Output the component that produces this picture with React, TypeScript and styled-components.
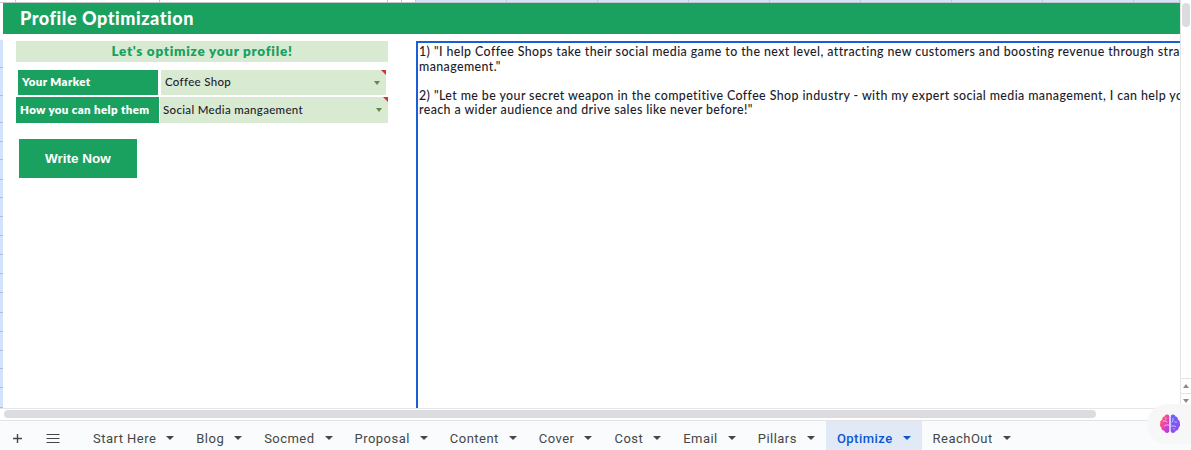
import React from "react";
import styled, { createGlobalStyle } from "styled-components";

const Global = createGlobalStyle`
  html, body { margin: 0; padding: 0; background: #fff; overflow: hidden; }
  #root { width: 1191px; height: 450px; }
`;
const Page = styled.div`
  position: relative; width: 1191px; height: 450px; display: flex; flex-direction: column; overflow: hidden;
  font-family: Lato, "Noto Sans", sans-serif; color: #1c1c2a;
`;
const Sheet = styled.div`display: flex; height: 408px;`;
const Main = styled.div`width: 1180px; display: flex; flex-direction: column;`;
const ColumnStrip = styled.div`
  height: 3px; flex: none; display: flex; background: #fff; border-bottom: 1px solid #c4c7c9; box-sizing: border-box;
`;
const ColumnCell = styled.div<{ $w: number; $selected: boolean }>`
  width: ${p => p.$w}px; flex: none; box-sizing: border-box; border-right: 1px solid #c4c7c9;
  background: ${p => (p.$selected ? "#d3e3fd" : "#fff")};
`;
const Inner = styled.div`flex: 1; min-height: 0; display: flex;`;
const RowHeader = styled.div`width: 3px; flex: none; display: flex; flex-direction: column; padding-top: 37px; background: #fff;`;
const RowTick = styled.div<{ $h: number }>`
  height: ${p => p.$h}px; box-sizing: border-box; flex: none; background: #d3e3fd; border-bottom: 1px solid #b4bdc9;
`;
const Grid = styled.div`flex: 1; min-width: 0; display: flex; flex-direction: column;`;
const Banner = styled.h1`
  margin: 0; height: 31px; background: #1aa160; color: #fff; padding: 0 0 2px 17px; box-sizing: border-box;
  display: flex; align-items: center; font: 900 18px/1 Lato, sans-serif; letter-spacing: .55px;
`;
const Body = styled.div`display: flex; padding: 7px 0 0 13px; flex: 1; min-height: 0;`;
const Left = styled.div`width: 372px; margin-right: 28px; display: flex; flex-direction: column;`;
const Subtitle = styled.div`
  height: 21px; box-sizing: border-box; padding-bottom: 2px; background: #d9ead3; color: #1aa160; display: flex; align-items: center; justify-content: center;
  font-size: 13.5px; font-weight: 800; letter-spacing: .72px; margin-bottom: 8px;
`;
const Form = styled.div`display: flex; flex-direction: column; gap: 2px;`;
const Row = styled.div<{ $inset?: boolean }>`
  display: grid; gap: ${p => (p.$inset ? 3 : 1)}px; height: ${p => (p.$inset ? 25 : 26)}px;
  padding: 0 ${p => (p.$inset ? 2 : 0)}px;
  grid-template-columns: ${p => (p.$inset ? "140px 1fr" : "143px 1fr")};
`;
const Label = styled.div`
  background: #1aa160; color: #fff; display: flex; align-items: center; padding: 0 0 2px 4px;
  font-size: 11.5px; font-weight: 800; letter-spacing: .38px;
`;
const Value = styled.div<{ $tight?: boolean }>`
  position: relative; background: #d9ead3; display: flex; align-items: center; padding: 0 0 2px ${p => (p.$tight ? 3 : 4)}px;
  font-size: 11.5px; letter-spacing: .32px; font-weight: 500;
  &::before { content: ""; position: absolute; top: 0; right: 0; border-top: 5px solid #d9312b; border-left: 5px solid transparent; }
  &::after { content: ""; position: absolute; top: 11px; right: 6px; border-top: 4px solid #5d8a44; border-left: 3.5px solid transparent; border-right: 3.5px solid transparent; }
`;
const WriteButton = styled.button`
  width: 118px; height: 39px; margin: 16px 0 0 3px; border: 0; background: #1aa160; color: #fff; padding: 0;
  font: 700 13.5px "Liberation Sans", sans-serif;
`;
const Output = styled.div`
  flex: 1; min-width: 0; border-left: 2px solid #1a5fd6; border-top: 2px solid #1a5fd6; padding: 2px 0 0 1px;
  font-size: 12.4px; line-height: 14.5px; font-weight: 500; letter-spacing: .41px; white-space: pre; overflow: hidden;
`;
const VScroll = styled.div`
  width: 11px; border-left: 1px solid #e3e3e3; box-sizing: border-box; background: #fff; display: flex; flex-direction: column; align-items: center;
`;
const Thumb = styled.div`width: 8px; height: 24px; margin-top: 3px; border-radius: 4px; background: #dadce0;`;
const Spacer = styled.div`flex: 1;`;
const ArrowBtn = styled.div<{ $up?: boolean }>`
  width: 100%; height: 14px; border-top: 1px solid #e3e3e3; display: flex; align-items: center; justify-content: center;
  &::after { content: ""; border-left: 3.5px solid transparent; border-right: 3.5px solid transparent;
    ${p => (p.$up ? "border-bottom: 4px solid #8a8a8a;" : "border-top: 4px solid #8a8a8a;")} }
`;
const HScroll = styled.div`
  height: 10px; border-top: 1px solid #e6e6e6; border-bottom: 1px solid #e1e3e5; background: #fff; padding: 1px 0 0 4px;
`;
const HThumb = styled.div`width: 1092px; height: 8px; border-radius: 4px; background: #dadce0;`;
const TabBar = styled.div`
  flex: 1; min-height: 0; background: #f9fbfd; display: flex; align-items: stretch; padding-left: 11px; color: #444746;
`;
const Tool = styled.button`
  width: 13px; height: 13px; padding: 0; border: 0; background: none; display: flex; color: #444746; align-self: center; margin-top: 5px;
`;
const ToolMenu = styled(Tool)`width: 14px; margin: 5px 22px 0 22px;`;
const Tab = styled.div<{ $active?: boolean }>`
  display: flex; align-items: center; gap: 10px; padding: 5px 11px 0;
  font: ${p => (p.$active ? 500 : 400)} 13px Roboto, sans-serif; letter-spacing: .47px;
  background: ${p => (p.$active ? "#e1e9f7" : "transparent")};
  color: ${p => (p.$active ? "#0b57d0" : "#444746")};
  &::after { content: ""; border-left: 4px solid transparent; border-right: 4px solid transparent; border-top: 4px solid currentColor; }
`;
const Floating = styled.div`
  position: absolute; left: 1147px; top: 404px; width: 60px; height: 40px; border-radius: 20px;
  background: #f7f7f8; display: flex; align-items: center; padding-left: 12px; box-sizing: border-box;
`;

const columns = [16, 144, 228, 14, 14, 91, 91, 91, 81, 91, 91, 91, 91, 46];
const rowTicks = [28, 28, 27, 19, 18, 20, 18, 19, 19, 19, 19, 19, 20, 19, 19, 18, 19, 20];
const tabs = ["Start Here", "Blog", "Socmed", "Proposal", "Content", "Cover", "Cost", "Email", "Pillars", "Optimize", "ReachOut"];
const text = `1) "I help Coffee Shops take their social media game to the next level, attracting new customers and boosting revenue through strategic
management."

2) "Let me be your secret weapon in the competitive Coffee Shop industry - with my expert social media management, I can help you
reach a wider audience and drive sales like never before!"`;

const Brain = () => (
  <svg width="22" height="20" viewBox="0 0 22 20" fill="none">
    <defs>
      <linearGradient id="l" x1="0" y1="0" x2="1" y2="1"><stop offset="0" stopColor="#f58a3c" /><stop offset=".5" stopColor="#ec3fb0" /><stop offset="1" stopColor="#a63cf0" /></linearGradient>
      <linearGradient id="r" x1="0" y1="0" x2="1" y2="1"><stop offset="0" stopColor="#5f6cf5" /><stop offset="1" stopColor="#a03ff0" /></linearGradient>
    </defs>
    <path d="M10.3 2.6C10.3 1 8.8.3 7.6.6 6.4.8 5.7 1.6 5.5 2.6 3.9 2.8 3 4 3.2 5.4 1.6 6.2.8 7.8 1.2 9.6.6 11 1 12.8 2.4 13.7c-.1 1.7 1.1 2.9 2.7 2.9.5 1.7 2.2 2.8 3.7 2.2.9-.3 1.5-1.1 1.5-2.1z" fill="url(#l)" />
    <path d="M11.7 2.6C11.7 1 13.2.3 14.4.6c1.2.2 1.9 1 2.1 2 1.6.2 2.5 1.4 2.3 2.8 1.6.8 2.4 2.4 2 4.2.6 1.4.2 3.2-1.2 4.1.1 1.700-1.100 2.900-2.700 2.900-.5 1.700-2.200 2.800-3.700 2.200-.9-.3-1.500-1.100-1.500-2.100z" fill="url(#r)" />
    <path d="M4 7h3l1.500 1.500M10 11H6.500L5 12.500M7 3.500v2M14 4v3l-1.500 1.500M18 8h-2.500M12 12h4l1 1M15 15.500v-1.500" stroke="#fff" strokeOpacity=".75" strokeWidth=".8" />
  </svg>
);

export default function App() {
  return (
    <Page>
      <Global />
      <Sheet>
        <Main>
          <ColumnStrip>
            {columns.map((w, i) => <ColumnCell key={i} $w={w} $selected={i >= 5} />)}
          </ColumnStrip>
          <Inner>
            <RowHeader>
              {rowTicks.map((h, i) => <RowTick key={i} $h={h} />)}
            </RowHeader>
            <Grid>
              <Banner>Profile Optimization</Banner>
              <Body>
                <Left>
                  <Subtitle>Let's optimize your profile!</Subtitle>
                  <Form>
                    <Row $inset><Label>Your Market</Label><Value>Coffee Shop</Value></Row>
                    <Row><Label>How you can help them</Label><Value $tight>Social Media mangaement</Value></Row>
                  </Form>
                  <WriteButton>Write Now</WriteButton>
                </Left>
                <Output>{text}</Output>
              </Body>
            </Grid>
          </Inner>
        </Main>
        <VScroll>
          <Thumb />
          <Spacer />
          <ArrowBtn $up />
          <ArrowBtn />
        </VScroll>
      </Sheet>
      <HScroll><HThumb /></HScroll>
      <TabBar>
        <Tool aria-label="Add sheet">
          <svg width="13" height="13" viewBox="0 0 13 13"><path d="M6.500 2v9M2 6.500h9" stroke="currentColor" strokeWidth="1.400" /></svg>
        </Tool>
        <ToolMenu aria-label="All sheets">
          <svg width="14" height="13" viewBox="0 0 14 13"><path d="M.5 2.500h13M.5 6.500h13M.5 10.500h13" stroke="currentColor" strokeWidth="1.200" /></svg>
        </ToolMenu>
        {tabs.map(t => <Tab key={t} $active={t === "Optimize"}>{t}</Tab>)}
      </TabBar>
      <Floating><Brain /></Floating>
    </Page>
  );
}
